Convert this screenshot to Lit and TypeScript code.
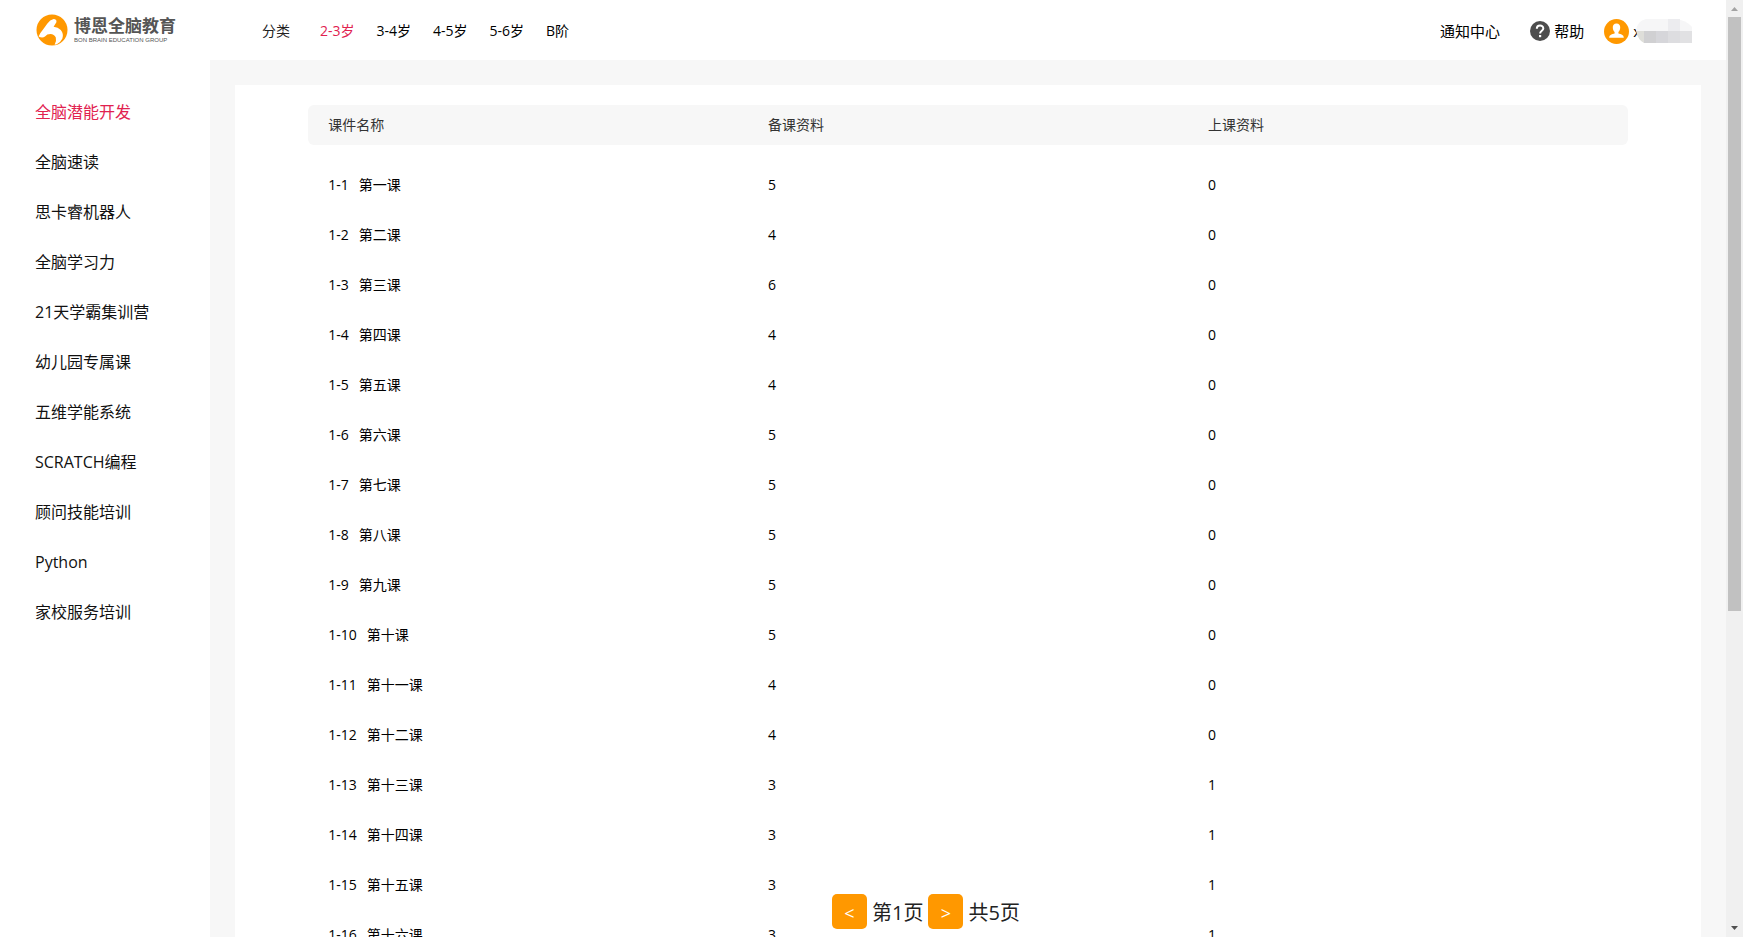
import { LitElement, html, css } from "lit";
import { customElement, property, state } from "lit/decorators.js";

interface Lesson {
  code: string;
  title: string;
  prepare: number;
  teach: number;
}

const AGES = ["2-3岁", "3-4岁", "4-5岁", "5-6岁", "B阶"];

const COURSES = [
  "全脑潜能开发",
  "全脑速读",
  "思卡睿机器人",
  "全脑学习力",
  "21天学霸集训营",
  "幼儿园专属课",
  "五维学能系统",
  "SCRATCH编程",
  "顾问技能培训",
  "Python",
  "家校服务培训",
];

const ORDINALS = ["一", "二", "三", "四", "五", "六", "七", "八", "九", "十", "十一", "十二", "十三", "十四", "十五", "十六"];
const PREPARE = [5, 4, 6, 4, 4, 5, 5, 5, 5, 5, 4, 4, 3, 3, 3, 3];
const TEACH = [0, 0, 0, 0, 0, 0, 0, 0, 0, 0, 0, 0, 1, 1, 1, 1];

const LESSONS: Lesson[] = ORDINALS.map((n, i) => ({
  code: `1-${i + 1}`,
  title: `第${n}课`,
  prepare: PREPARE[i],
  teach: TEACH[i],
}));

@customElement("brand-logo")
class BrandLogo extends LitElement {
  static styles = css`
    :host { display: flex; align-items: center; gap: 6px; color: #555; }
    .mark { display: block; width: 32px; height: 32px; }
    .words { display: flex; flex-direction: column; }
    .cn { font-size: 17px; line-height: 20px; font-weight: 700; white-space: nowrap; }
    .en { font: 6px/8px "Liberation Sans", sans-serif; white-space: nowrap; }
  `;
  render() {
    return html`
      <svg class="mark" viewBox="0 0 32 32" aria-hidden="true">
        <circle cx="16" cy="16" r="15.5" fill="#ff9800" />
        <path
          fill="#fff"
          d="M17.6 5 Q21 5.2 20.4 8.2 L17.6 12.8 Q22 13.2 24.8 16 Q28 20 26.4 24.6 Q24.6 28.6 20.8 30.2 L18.6 30.8 Q20.8 27 19.8 23.6 Q18.2 20 14.4 20 Q11 20 9 22.4 Q6.4 24.4 2.6 22.4 Q4.4 18.6 7.6 14.8 L11.4 9.4 Q14 5.6 17.6 5 Z"
        />
      </svg>
      <div class="words">
        <span class="cn">博恩全脑教育</span>
        <span class="en">BON BRAIN EDUCATION GROUP</span>
      </div>
    `;
  }
}

@customElement("top-bar")
class TopBar extends LitElement {
  @state() private age = 0;

  static styles = css`
    :host { display: flex; align-items: center; height: 60px; padding: 0 34px 0 36px; background: #fff; }
    a { color: inherit; text-decoration: none; white-space: nowrap; }
    .brand { width: 226px; flex: none; }
    .ages { display: flex; align-items: center; gap: 22px; padding-top: 2px; font-size: 14px; line-height: 20px; }
    .label { margin-right: 8px; color: #222; }
    .active { color: #e1224f; }
    .tools { display: flex; align-items: center; margin-left: auto; padding-top: 2px; font-size: 15px; line-height: 20px; }
    .help { display: flex; align-items: center; gap: 4px; margin-left: 30px; }
    .user { display: flex; align-items: center; gap: 4px; margin-left: 20px; }
    .icon20 { display: block; width: 20px; height: 20px; }
    .icon25 { display: block; width: 25px; height: 25px; }
    .name { display: flex; align-items: center; }
    .mosaic { display: block; width: 56px; height: 24px; margin-left: -5px; }
  `;
  render() {
    return html`
      <brand-logo class="brand"></brand-logo>
      <nav class="ages">
        <span class="label">分类</span>
        ${AGES.map(
          (a, i) => html`<a
            href="#"
            class=${i === this.age ? "active" : ""}
            @click=${(e: Event) => {
              e.preventDefault();
              this.age = i;
            }}
            >${a}</a
          >`
        )}
      </nav>
      <div class="tools">
        <a href="#">通知中心</a>
        <a href="#" class="help">
          <svg class="icon20" viewBox="0 0 20 20" aria-hidden="true">
            <circle cx="10" cy="10" r="10" fill="#4d4d4d" />
            <path d="M6.8 7.8 C6.8 3.4 13.3 3.6 13.3 7.4 C13.3 9.8 10.1 9.8 10.1 12.6" fill="none" stroke="#fff" stroke-width="2" />
            <rect x="9" y="14" width="2.2" height="2.2" fill="#fff" />
          </svg>
          <span>帮助</span>
        </a>
        <a href="#" class="user">
          <svg class="icon25" viewBox="0 0 25 25" aria-hidden="true">
            <circle cx="12.5" cy="12.5" r="12.5" fill="#ff9800" />
            <path
              fill="#fff"
              d="M12.5 4.6 C15 4.6 16.4 6.4 16.2 8.8 C16.1 10.6 15.4 12 14.4 13 V14.6 C16.6 15.2 19.8 15.8 19.8 18.8 H5.2 C5.2 15.8 8.4 15.2 10.6 14.6 V13 C9.6 12 8.9 10.6 8.8 8.8 C8.6 6.4 10 4.6 12.5 4.6 Z"
            />
          </svg>
          <span class="name">
            x
            <svg class="mosaic" viewBox="0 0 56 24" aria-hidden="true">
              <path d="M10 0 H40 Q50 1 56 8 V12 H0 Q1 2 10 0 Z" fill="#f6f6f7" />
              <rect x="32" y="0" width="12" height="12" fill="#ececef" />
              <path d="M0 12 H8 V24 Q2 21 0 12 Z" fill="#deded9" />
              <rect x="8" y="12" width="12" height="12" fill="#d0d0d2" />
              <rect x="20" y="12" width="12" height="12" fill="#d6d6da" />
              <rect x="32" y="12" width="12" height="12" fill="#dddde0" />
              <rect x="44" y="12" width="12" height="12" fill="#e1e1e3" />
            </svg>
          </span>
        </a>
      </div>
    `;
  }
}

@customElement("side-menu")
class SideMenu extends LitElement {
  @state() private current = 0;

  static styles = css`
    :host { display: block; padding-top: 27px; background: #fff; }
    .item { display: block; padding-left: 35px; font-size: 16px; line-height: 50px; color: #111; text-decoration: none; white-space: nowrap; }
    .active { color: #e1224f; }
  `;
  render() {
    return html`<nav>
      ${COURSES.map(
        (c, i) => html`<a
          href="#"
          class="item ${i === this.current ? "active" : ""}"
          @click=${(e: Event) => {
            e.preventDefault();
            this.current = i;
          }}
          >${c}</a
        >`
      )}
    </nav>`;
  }
}

@customElement("lesson-table")
class LessonTable extends LitElement {
  @property({ attribute: false }) lessons: Lesson[] = [];

  static styles = css`
    :host { display: block; padding: 20px 5%; background: #fff; }
    table { width: 100%; table-layout: fixed; border-collapse: separate; border-spacing: 0; font-size: 14px; color: #000; }
    th, td { padding: 0 0 0 20px; text-align: left; font-weight: 400; }
    th { line-height: 40px; background: #f7f7f7; color: #333; }
    th:first-child { border-radius: 6px 0 0 6px; }
    th:last-child { border-radius: 0 6px 6px 0; }
    tbody::before { content: ""; display: block; height: 15px; }
    td { line-height: 50px; }
    .lesson { display: flex; gap: 10px; }
  `;
  render() {
    return html`<table>
      <thead>
        <tr><th scope="col">课件名称</th><th scope="col">备课资料</th><th scope="col">上课资料</th></tr>
      </thead>
      <tbody>
        ${this.lessons.map(
          (l) => html`<tr>
            <td><div class="lesson"><span>${l.code}</span><span>${l.title}</span></div></td>
            <td>${l.prepare}</td>
            <td>${l.teach}</td>
          </tr>`
        )}
      </tbody>
    </table>`;
  }
}

@customElement("page-switch")
class PageSwitch extends LitElement {
  @state() private page = 1;
  private total = 5;

  static styles = css`
    :host { display: flex; align-items: center; gap: 5px; font-size: 20px; line-height: 35px; color: #222; white-space: nowrap; }
    span { padding-top: 2px; }
    button { width: 35px; height: 35px; padding: 4px 0 0; border: 0; border-radius: 5px; background: #ff9800; color: #fff; font: inherit; font-size: 18px; line-height: 31px; }
  `;
  private go(step: number) {
    this.page = Math.min(this.total, Math.max(1, this.page + step));
  }
  render() {
    return html`
      <button type="button" @click=${() => this.go(-1)}>&lt;</button>
      <span>第${this.page}页</span>
      <button type="button" @click=${() => this.go(1)}>&gt;</button>
      <span>共${this.total}页</span>
    `;
  }
}

@customElement("scroll-rail")
class ScrollRail extends LitElement {
  static styles = css`
    :host { display: flex; flex-direction: column; background: #f0f0f0; }
    .arrow { display: block; width: 17px; height: 17px; flex: none; }
    .track { flex: 1; padding: 0 2px; }
    .thumb { height: 65.8%; background: #c1c1c1; }
  `;
  render() {
    return html`
      <svg class="arrow" viewBox="0 0 17 17" aria-hidden="true"><path d="M5 11 L8.5 7 L12 11 Z" fill="#a3a3a3" /></svg>
      <div class="track"><div class="thumb"></div></div>
      <svg class="arrow" viewBox="0 0 17 17" aria-hidden="true"><path d="M5 6 L8.5 10 L12 6 Z" fill="#505050" /></svg>
    `;
  }
}

@customElement("app-root")
class AppRoot extends LitElement {
  static styles = css`
    :host {
      display: grid;
      grid-template-columns: minmax(0, 1fr) 17px;
      height: 100vh;
      overflow: hidden;
      background: #f7f7f7;
      color: #000;
      font-family: "Open Sans", "Noto Sans CJK SC", sans-serif;
    }
    .page { position: relative; display: grid; grid-template: 60px minmax(0, 1fr) / 210px minmax(0, 1fr); min-height: 0; }
    .top { grid-column: 1 / -1; }
    .main { display: flex; flex-direction: column; padding: 25px 25px 0; overflow: hidden; }
    .panel { flex: 1 0 auto; }
    .pager { position: absolute; bottom: 7px; left: calc(50% - 31px); }
  `;
  render() {
    return html`
      <div class="page">
        <top-bar class="top"></top-bar>
        <side-menu></side-menu>
        <main class="main"><lesson-table class="panel" .lessons=${LESSONS}></lesson-table></main>
        <page-switch class="pager"></page-switch>
      </div>
      <scroll-rail></scroll-rail>
    `;
  }
}
